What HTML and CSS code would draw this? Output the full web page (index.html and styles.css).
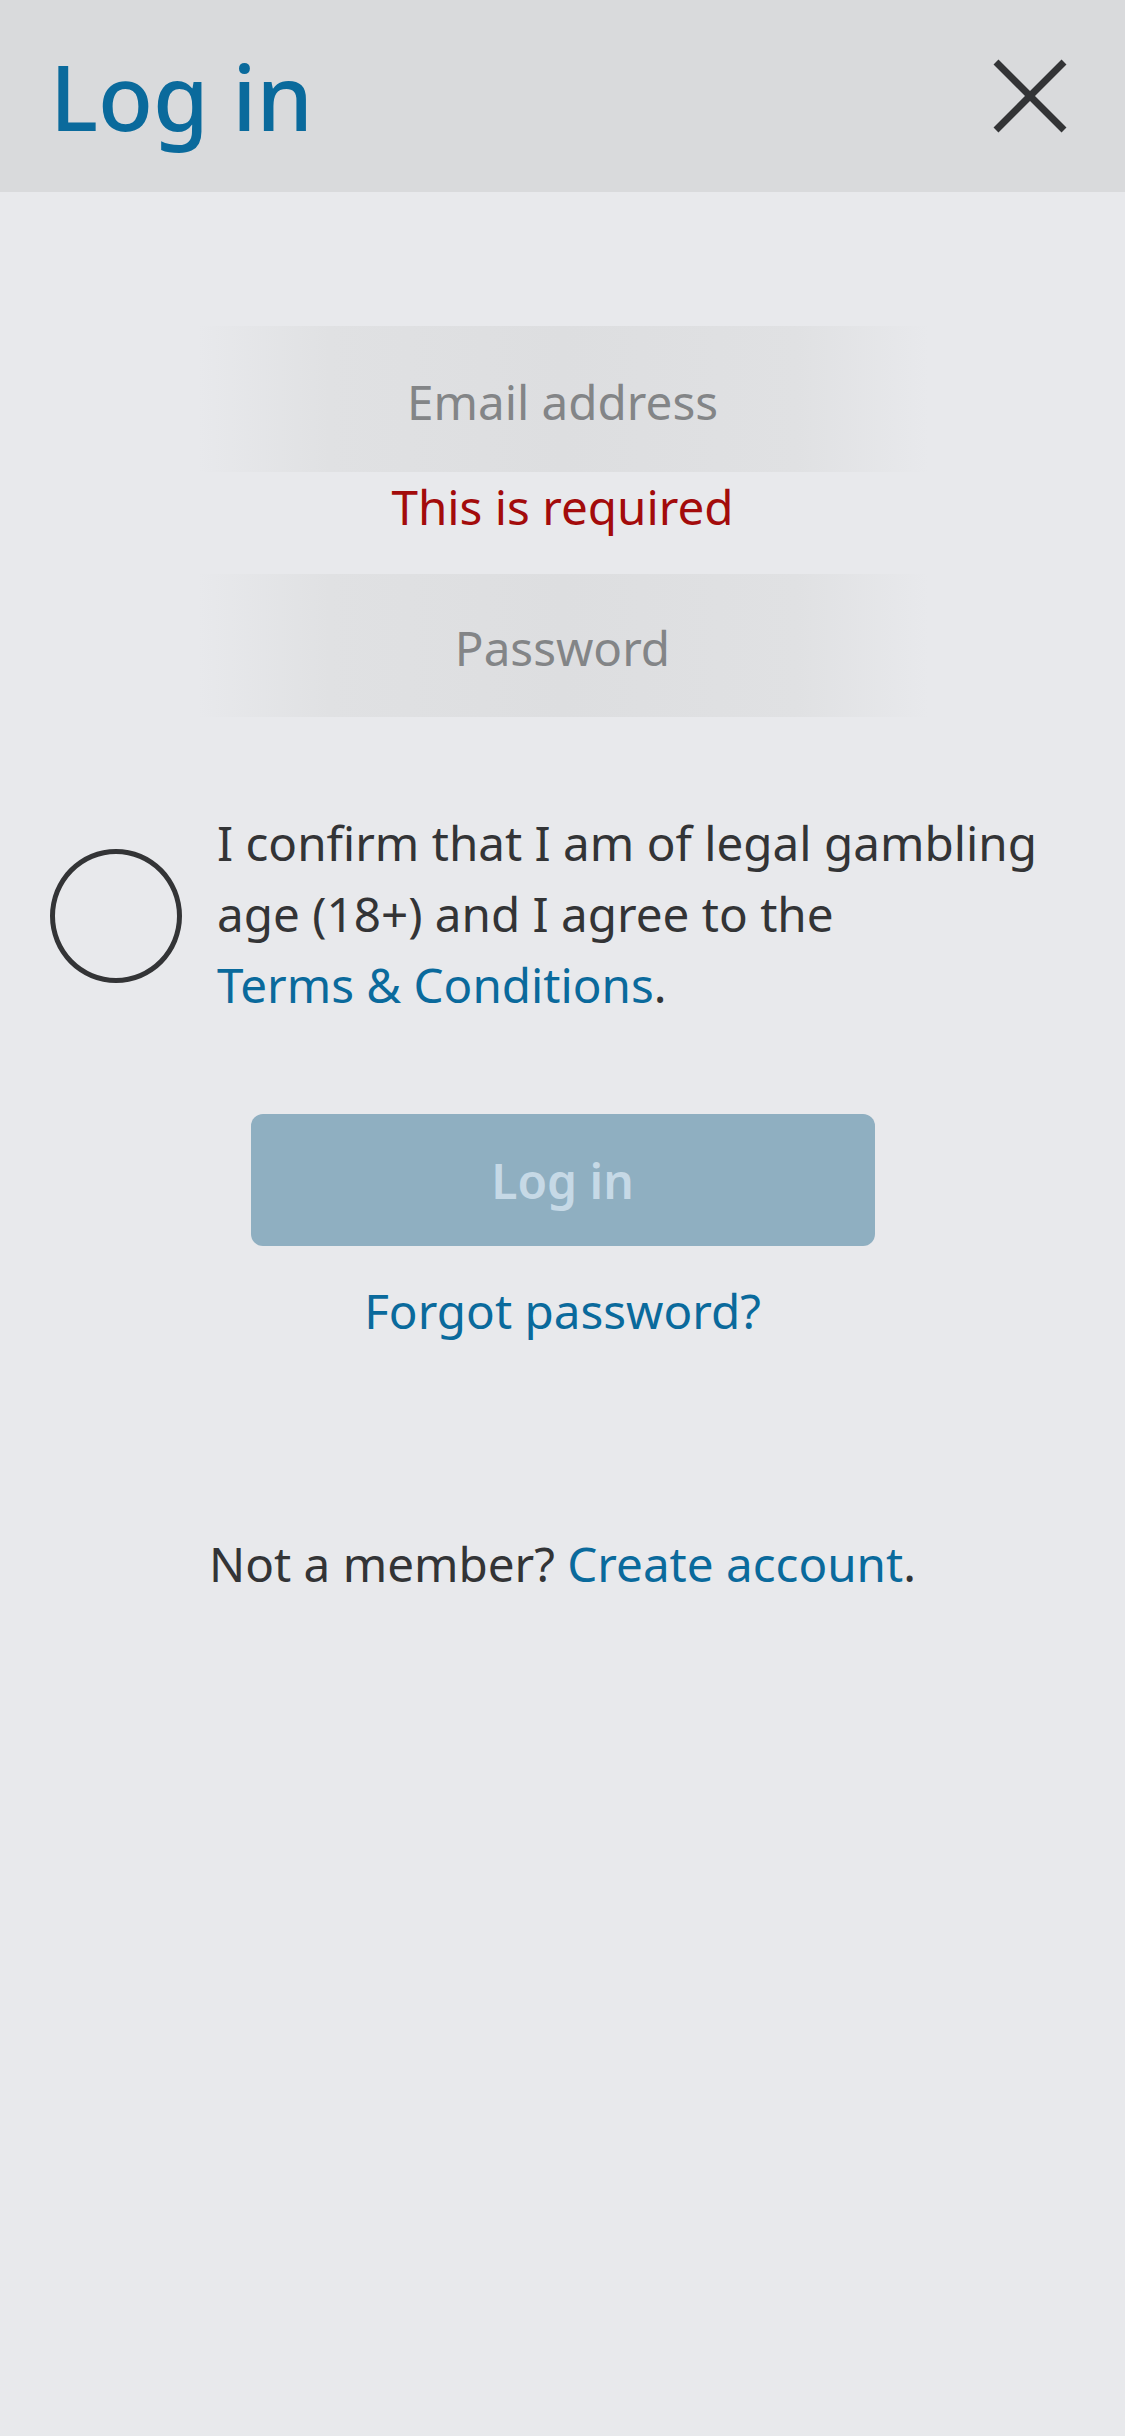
FILE: index.html
```html
<!DOCTYPE html>
<html lang="en">
<head>
<meta charset="utf-8">
<title>Log in</title>
<link rel="stylesheet" href="styles.css">
</head>
<body>
<header class="topbar">
  <h1 class="title">Log in</h1>
  <button class="close" aria-label="Close">
    <svg viewBox="0 0 74 74" width="74" height="74"><path d="M3 3 L71 71 M71 3 L3 71" stroke="#333436" stroke-width="7" fill="none"/></svg>
  </button>
</header>
<main class="content">
  <div class="field"><span class="placeholder">Email address</span></div>
  <p class="error">This is required</p>
  <div class="field field-pw"><span class="placeholder">Password</span></div>
  <div class="consent">
    <span class="radio"></span>
    <p class="consent-text">I confirm that I am of legal gambling age (18+) and I agree to the <a class="link nowrap" href="#">Terms &amp; Conditions</a>.</p>
  </div>
  <button class="login-btn">Log in</button>
  <a class="link forgot" href="#">Forgot password?</a>
  <p class="signup">Not a member? <a class="link" href="#">Create account</a>.</p>
</main>
</body>
</html>
```
FILE: styles.css
```css
* { box-sizing: border-box; }
html, body { margin: 0; padding: 0; }
body {
  background: #e8e9ec;
  font-family: "Noto Sans", "Open Sans", sans-serif;
  color: #333436;
  width: 1125px;
  min-height: 2436px;
}
.topbar {
  height: 192px;
  background: #d9dadc;
  display: flex;
  align-items: center;
  justify-content: space-between;
  padding: 0 58px 0 50px;
}
.title {
  margin: 0;
  font-size: 90px;
  font-weight: 500;
  color: #0a6a9c;
  line-height: 122px;
}
.close {
  background: none;
  border: 0;
  padding: 0;
  width: 74px;
  height: 74px;
  display: block;
}
.close svg { display: block; }
.content {
  display: flex;
  flex-direction: column;
  align-items: center;
  padding-top: 134px;
}
.field {
  width: 730px;
  height: 146px;
  padding-top: 5px;
  display: flex;
  align-items: center;
  justify-content: center;
  background: linear-gradient(to right, rgba(223,224,226,0) 0%, #e0e1e3 18%, #dddee0 50%, #e0e1e3 82%, rgba(223,224,226,0) 100%);
}
.field-pw { height: 143px; margin-top: 35px; }
.placeholder {
  font-size: 47.6px;
  color: #838587;
  line-height: 64px;
}
.error {
  margin: 3px 0 0;
  font-size: 47.6px;
  line-height: 64px;
  color: #a30b0b;
}
.consent {
  align-self: stretch;
  display: flex;
  align-items: center;
  gap: 35px;
  padding: 0 30px 0 50px;
  margin-top: 90px;
}
.radio {
  flex: 0 0 auto;
  width: 132px;
  height: 134px;
  border: 5px solid #333436;
  border-radius: 50%;
  margin-top: 5px;
}
.consent-text {
  margin: 0;
  font-size: 47.6px;
  line-height: 71px;
}
.link { color: #0a6a9c; text-decoration: none; }
.nowrap { white-space: nowrap; }
.login-btn {
  margin-top: 94px;
  width: 624px;
  height: 132px;
  border: 0;
  border-radius: 12px;
  background: #8fafc1;
  color: #c6d9e6;
  font-family: "Noto Sans", "Open Sans", sans-serif;
  font-size: 48px;
  font-weight: 600;
}
.forgot {
  margin-top: 33px;
  font-size: 47.6px;
  line-height: 64px;
}
.signup {
  margin: 189px 0 0;
  font-size: 47.6px;
  line-height: 64px;
}
```
